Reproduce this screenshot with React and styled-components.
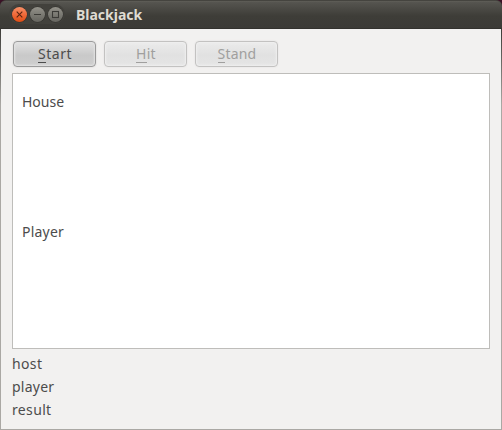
import React from 'react';
import styled, { createGlobalStyle } from 'styled-components';

const GlobalStyle = createGlobalStyle`
  * { box-sizing: border-box; }
  body { margin: 0; background: #3a1226; font-family: "Noto Sans", "Open Sans", sans-serif; overflow: hidden; }
`;

const Window = styled.div`
  width: 502px;
  height: 430px;
  display: flex;
  flex-direction: column;
  border-radius: 6px 6px 0 0;
  overflow: hidden;
  padding: 0 1px 1px;
  background: linear-gradient(#3c3b37 0, #3c3b37 29px, #aaa8a4 105px, #aaa8a4 100%);
`;

const TitleBar = styled.header`
  flex: none;
  height: 29px;
  margin: 0 -1px;
  padding: 1px 0 1px 9px;
  display: flex;
  align-items: center;
  border-top: 1px solid #45443f;
  border-bottom: 1px solid #33322e;
  border-radius: 6px 6px 0 0;
  background: linear-gradient(#63625b 0, #565550 1px, #3e3d38 15px, #3c3b37 100%);
`;

const Controls = styled.div`
  display: flex;
  align-items: center;
  height: 20px;
  margin-top: -1px;
  padding: 0 1px;
  border-radius: 10px;
  background: #42413c;
`;

const Control = styled.svg`
  display: block;
  width: 18px;
  height: 18px;
`;

const Title = styled.h1`
  margin: 0 0 0 11px;
  font-size: 14px;
  line-height: 20px;
  font-weight: 700;
  letter-spacing: 0;
  color: #dfdbd2;
`;

const Content = styled.main`
  flex: 1;
  display: flex;
  flex-direction: column;
  padding: 12px 11px 0;
  background: #f2f1f0;
`;

const Toolbar = styled.div`
  display: flex;
  gap: 8px;
  padding-left: 1px;
  height: 26px;
`;

const Button = styled.button`
  width: 83px;
  height: 26px;
  padding: 0 0 0 1px;
  border: 1px solid #9b9b9b;
  border-radius: 4px;
  background: linear-gradient(#e2e2e2, #c9c9c9 55%, #cecece);
  box-shadow: inset 0 0 2px 1px #e3e3e3, 0 0 1px 1px #e8e7e6;
  color: #4c4c4c;
  font-family: inherit;
  font-size: 14px;
  line-height: 24px;
  letter-spacing: ${(p) => p.$tracking}px;

  &:disabled {
    border-color: #c3c2c1;
    background: linear-gradient(#ebebeb, #e1e1e1 55%, #e5e5e5);
    box-shadow: inset 0 0 2px 1px #efefef, 0 0 1px 1px #edeceb;
    color: #a09f9e;
  }
`;

const Mnemonic = styled.span`
  display: inline-block;
  height: 21px;
  line-height: 24px;
  vertical-align: top;
  border-bottom: 1px solid currentColor;
`;

const Table = styled.section`
  height: 276px;
  margin-top: 6px;
  padding: 18px 9px 0;
  display: grid;
  grid-template-rows: 130px 1fr;
  background: #fff;
  border: 1px solid #bebdba;
`;

const Label = styled.span`
  font-size: 14px;
  line-height: 20px;
  letter-spacing: ${(p) => p.$tracking || 0}px;
  color: #4c4c4c;
`;

const Status = styled.footer`
  display: grid;
  grid-auto-rows: 23px;
  align-items: center;
  margin-top: 3px;
`;

function WindowControl({ kind }) {
  const close = kind === 'close';
  return (
    <Control viewBox="-0.5 -0.5 18 18" aria-label={kind}>
      <defs>
        <linearGradient id={kind} x1="0" y1="0" x2="0" y2="1">
          <stop offset="0" stopColor={close ? '#f69068' : '#94928a'} />
          <stop offset="0.5" stopColor={close ? '#f16a3a' : '#7b7a73'} />
          <stop offset="1" stopColor={close ? '#df4e15' : '#66655f'} />
        </linearGradient>
      </defs>
      <circle cx="9" cy="9" r="8" fill="#33322e" />
      <circle cx="9" cy="9" r="7.5" fill={`url(#${kind})`} />
      <g fill="none" stroke={close ? '#5b2410' : '#3c3b37'} strokeWidth="1.1">
        {close && <path d="M6.2 6.2 11.8 11.8M11.8 6.2 6.2 11.8" />}
        {kind === 'minimize' && <path d="M5.5 9h7" />}
        {kind === 'maximize' && <rect x="6" y="6" width="6" height="6" />}
      </g>
    </Control>
  );
}

function ActionButton({ text, tracking, disabled }) {
  return (
    <Button $tracking={tracking} disabled={disabled}>
      <Mnemonic>{text[0]}</Mnemonic>{text.slice(1)}
    </Button>
  );
}

export default function App() {
  return (
    <>
      <GlobalStyle />
      <Window>
        <TitleBar>
          <Controls>
            <WindowControl kind="close" />
            <WindowControl kind="minimize" />
            <WindowControl kind="maximize" />
          </Controls>
          <Title>Blackjack</Title>
        </TitleBar>
        <Content>
          <Toolbar>
            <ActionButton text="Start" tracking={0.5} />
            <ActionButton text="Hit" tracking={0.3} disabled />
            <ActionButton text="Stand" tracking={0.2} disabled />
          </Toolbar>
          <Table>
            <Label>House</Label>
            <Label $tracking={0.2}>Player</Label>
          </Table>
          <Status>
            <Label $tracking={0.35}>host</Label>
            <Label $tracking={0.25}>player</Label>
            <Label $tracking={0.35}>result</Label>
          </Status>
        </Content>
      </Window>
    </>
  );
}
